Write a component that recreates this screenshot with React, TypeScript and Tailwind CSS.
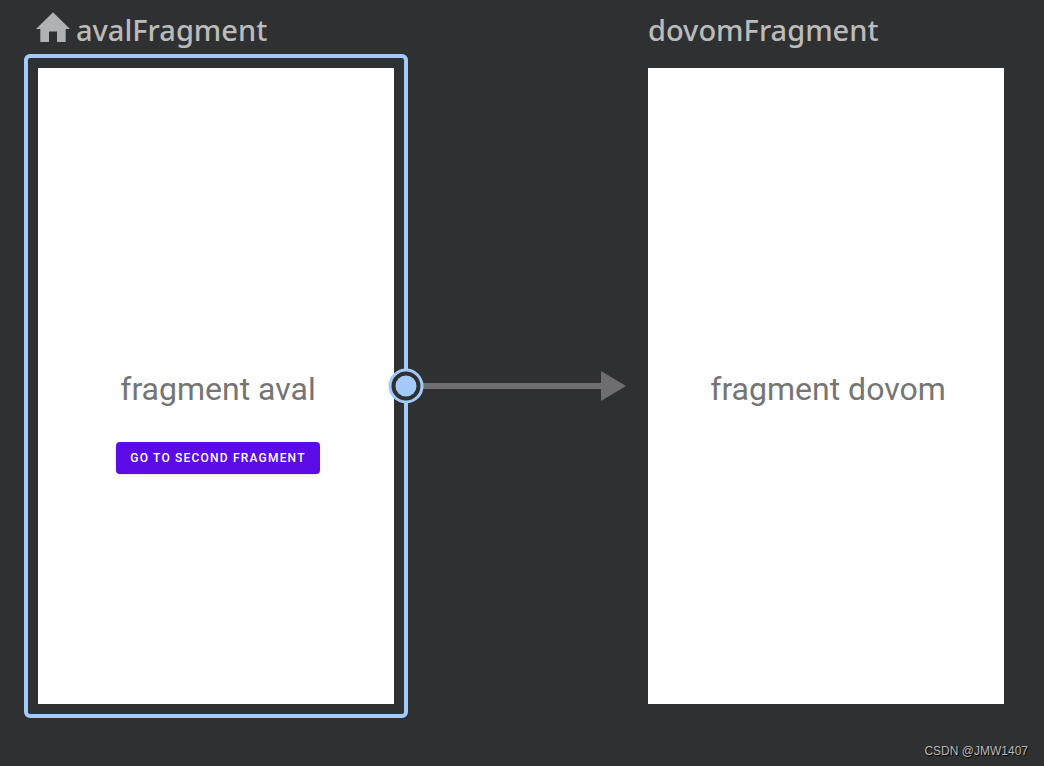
import * as React from "react"

interface ScreenPreviewProps {
  label: string
  action?: string
}

function ScreenPreview({ label, action }: ScreenPreviewProps) {
  return (
    <div className="flex h-[636px] flex-col items-center bg-white pt-[301px] font-['Roboto',sans-serif]">
      <p className="ml-1 text-[32px] leading-10 text-[#757575]">{label}</p>
      {action && (
        <button
          type="button"
          className="mt-[33px] ml-1 h-8 rounded-[4px] bg-[#5a0be6] px-[14px] text-xs font-medium tracking-widest text-white uppercase shadow-sm"
        >
          {action}
        </button>
      )}
    </div>
  )
}

function HomeIcon() {
  return (
    <svg className="h-8 w-[34px]" viewBox="0 0 34 32" fill="#afb1b3" aria-hidden="true">
      <path d="M17 0.3 34 17H29.700V30H21V19.500H13V30H4.300V17H0Z" />
    </svg>
  )
}

function NodeTitle({ children }: { children: React.ReactNode }) {
  return (
    <h2 className="text-[29px] leading-10 font-medium text-[#bbbbbb] font-['Noto_Sans',sans-serif]">{children}</h2>
  )
}

function ActionArrow() {
  return (
    <div className="flex flex-1 items-center pr-[22px]">
      <div className="h-[6px] flex-1 bg-[#6e6e70]" />
      <svg className="h-[30px] w-[25px]" viewBox="0 0 25 30" fill="#6e6e70" aria-hidden="true">
        <path d="M0 0 25 15 0 30Z" />
      </svg>
    </div>
  )
}

export default function App() {
  return (
    <div className="flex min-h-screen flex-col bg-[#2f3031]">
      <main className="flex items-start pt-[10px] pr-10 pl-6">
        <section className="w-96 shrink-0">
          <div className="flex h-11 items-start gap-[6px] pl-3">
            <div className="pt-[2px]">
              <HomeIcon />
            </div>
            <NodeTitle>avalFragment</NodeTitle>
          </div>
          <div className="relative rounded-md border-4 border-[#a4cafb] p-[10px]">
            <ScreenPreview label="fragment aval" action="Go to second fragment" />
            {/* connection handle on the selected node */}
            <svg
              className="absolute top-[310px] -right-5 size-9"
              viewBox="0 0 36 36"
              aria-hidden="true"
            >
              <circle cx="18" cy="18" r="16" fill="#2f3031" stroke="#a4cafb" strokeWidth="3" />
              <circle cx="18" cy="18" r="10.500" fill="#a4cafb" />
            </svg>
          </div>
        </section>

        <div className="mt-11 flex h-[664px] flex-1">
          <ActionArrow />
        </div>

        <section className="w-[356px] shrink-0">
          <div className="h-[58px]">
            <NodeTitle>dovomFragment</NodeTitle>
          </div>
          <ScreenPreview label="fragment dovom" />
        </section>
      </main>

      <footer className="mt-auto pr-4 pb-[7px] text-right text-xs leading-4 text-[#b9b9b9] font-['Liberation_Sans',sans-serif] [text-shadow:1px_1px_1px_#000]">
        CSDN @JMW1407
      </footer>
    </div>
  )
}
